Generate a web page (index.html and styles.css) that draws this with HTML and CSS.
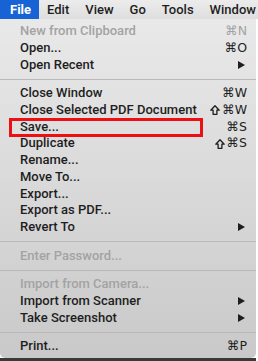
FILE: index.html
```html
<!DOCTYPE html>
<html lang="en">
<head>
  <meta charset="UTF-8">
  <title>File menu</title>
  <link rel="stylesheet" href="styles.css">
</head>
<body>
  <div class="menubar">
    <span class="bar-item active">File</span>
    <span class="bar-item">Edit</span>
    <span class="bar-item">View</span>
    <span class="bar-item">Go</span>
    <span class="bar-item">Tools</span>
    <span class="bar-item">Window</span>
  </div>

  <div class="menu">
    <div class="row off"><span>New from Clipboard</span><span class="key">⌘N</span></div>
    <div class="row"><span>Open...</span><span class="key">⌘O</span></div>
    <div class="row"><span>Open Recent</span><span class="sub"></span></div>
    <div class="sep"></div>
    <div class="row"><span>Close Window</span><span class="key">⌘W</span></div>
    <div class="row"><span>Close Selected PDF Document</span><span class="key"><svg class="shift" viewBox="0 0 10 10"><path d="M5 .8 9.2 5.2H6.9V9.3H3.1V5.2H.8Z"/></svg>⌘W</span></div>
    <div class="row marked"><span>Save...</span><span class="key">⌘S</span></div>
    <div class="row"><span>Duplicate</span><span class="key"><svg class="shift" viewBox="0 0 10 10"><path d="M5 .8 9.2 5.2H6.9V9.3H3.1V5.2H.8Z"/></svg>⌘S</span></div>
    <div class="row"><span>Rename...</span></div>
    <div class="row"><span>Move To...</span></div>
    <div class="row"><span>Export...</span></div>
    <div class="row"><span>Export as PDF...</span></div>
    <div class="row"><span>Revert To</span><span class="sub"></span></div>
    <div class="sep"></div>
    <div class="row off"><span>Enter Password...</span></div>
    <div class="sep"></div>
    <div class="row off"><span>Import from Camera...</span></div>
    <div class="row"><span>Import from Scanner</span><span class="sub"></span></div>
    <div class="row"><span>Take Screenshot</span><span class="sub"></span></div>
    <div class="sep"></div>
    <div class="row"><span>Print...</span><span class="key">⌘P</span></div>
  </div>
  <div class="shade"></div>
</body>
</html>
```

FILE: styles.css
```css
body {
  margin: 0;
  width: 258px;
  height: 361px;
  overflow: hidden;
  background: #fff;
  font-family: Roboto, "Liberation Sans", sans-serif;
  font-weight: 500;
  font-size: 13px;
  color: #1e1e1e;
}
.menubar {
  display: flex;
  height: 19px;
  line-height: 19px;
  background: linear-gradient(#ececec, #dedede);
  white-space: nowrap;
  overflow: hidden;
}
.bar-item {
  padding: 0 8px;
}
.bar-item:first-child {
  padding-left: 10px;
  padding-right: 8px;
}
.active {
  background: #1763d6;
  color: #fff;
  font-weight: bold;
}
.menu {
  width: 256px;
  padding: 4px 0 3px;
  background: linear-gradient(#e9e9e9, #c9c9c9);
  border-radius: 0 0 5px 5px;
}
.row {
  position: relative;
  display: flex;
  justify-content: space-between;
  align-items: center;
  height: 16.75px;
  line-height: 16.75px;
  padding: 0 9px 0 20px;
}
.off {
  color: #a3a3a3;
}
.key {
  display: flex;
  align-items: center;
  font-family: "DejaVu Sans", sans-serif;
  font-weight: normal;
  font-size: 12.5px;
}
.shift {
  width: 10px;
  height: 10px;
  margin-right: 2px;
  fill: none;
  stroke: #1e1e1e;
  stroke-width: 1.3;
  stroke-linejoin: round;
}
.sub {
  width: 0;
  height: 0;
  margin-right: 2px;
  border-left: 7px solid #1e1e1e;
  border-top: 4px solid transparent;
  border-bottom: 4px solid transparent;
}
.sep {
  height: 1px;
  margin: 5.5px 0 5.25px;
  background: #b9b9b9;
}
.marked::before {
  content: "";
  position: absolute;
  left: 9px;
  top: -1px;
  width: 188px;
  height: 13px;
  border: 3px solid #ec0f13;
}
.shade {
  height: 4px;
  width: 256px;
  background: #3a3a3a;
}
```
